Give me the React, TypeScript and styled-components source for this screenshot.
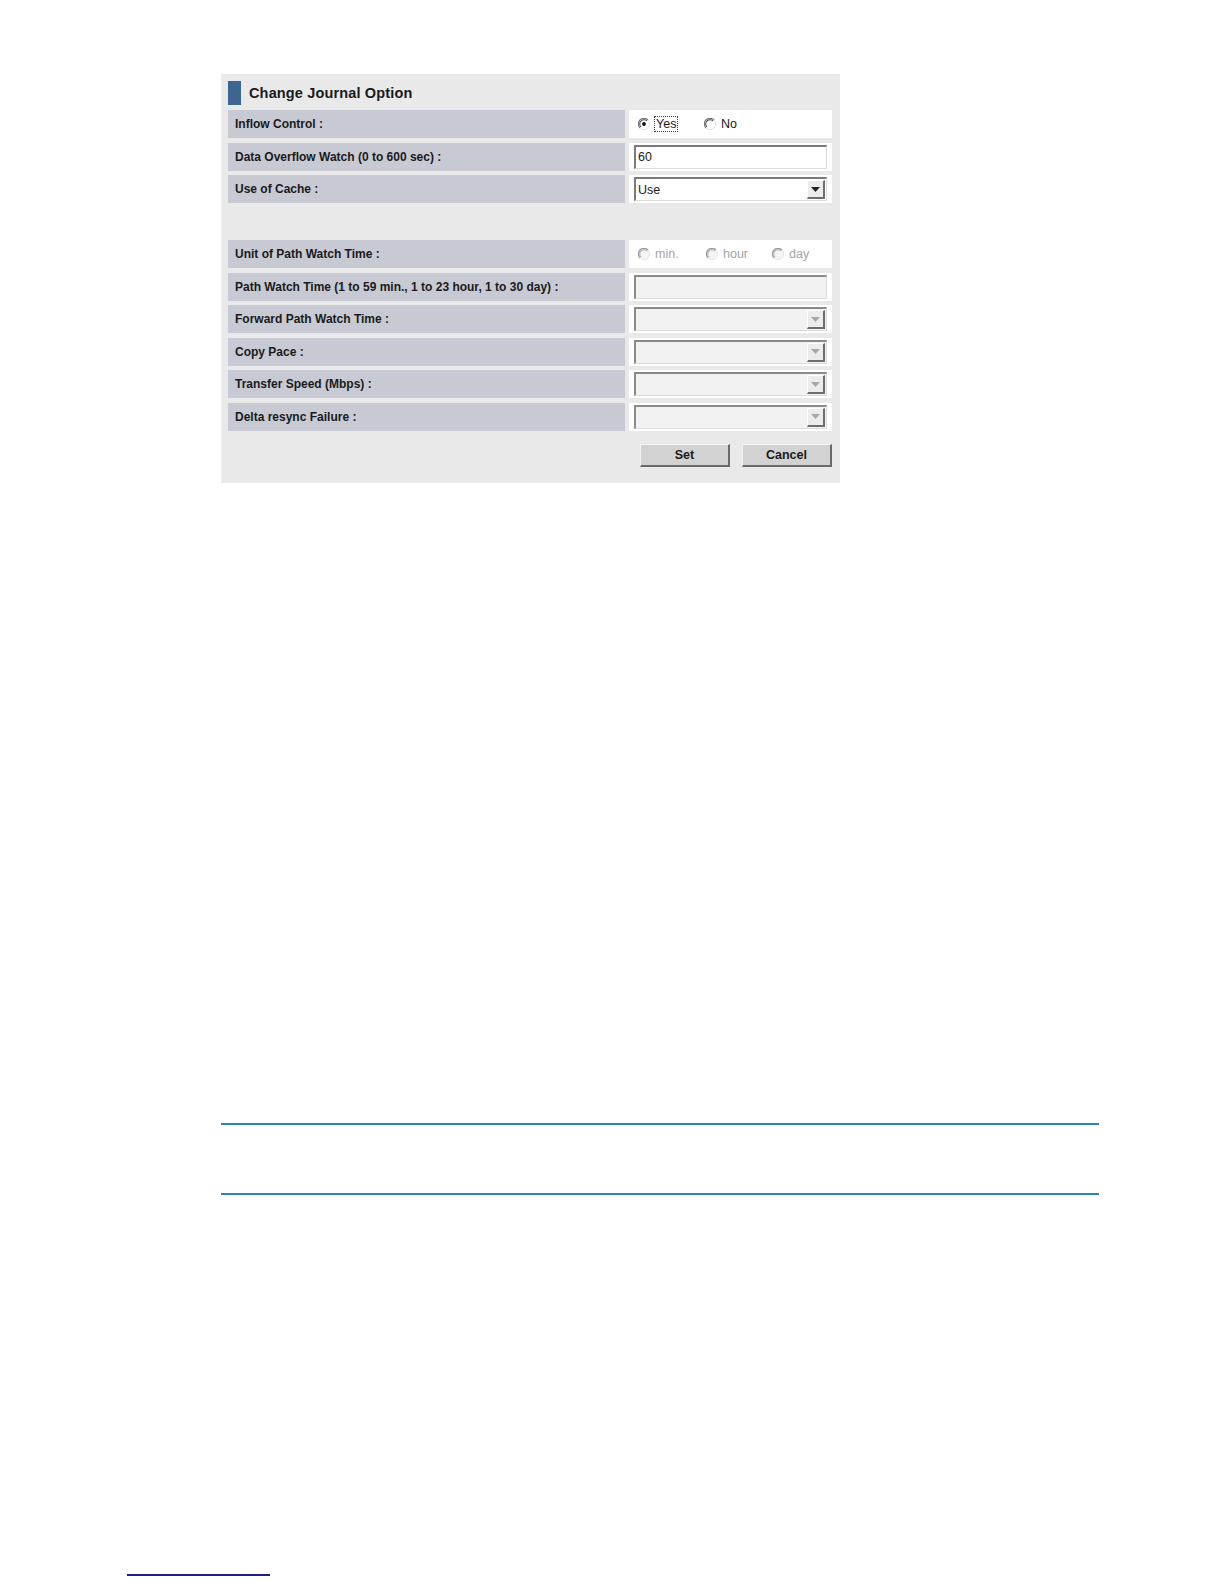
import React from "react";
import styled, { createGlobalStyle } from "styled-components";

const Global = createGlobalStyle`
  html, body { margin: 0; padding: 0; background: #ffffff; }
  body { font-family: "Liberation Sans", Arial, sans-serif; color: #1c1c1c; }
`;

const Page = styled.div`
  width: 1224px;
  padding-top: 74px;
  display: flex;
  flex-direction: column;
`;

const Panel = styled.div`
  margin-left: 221px;
  width: 619px;
  box-sizing: border-box;
  background: #e9e9e9;
  padding: 0 8px 16px 7px;
  display: flex;
  flex-direction: column;
`;

const Header = styled.div`
  height: 36px;
  display: flex;
  align-items: center;
  gap: 8px;
`;

const HeaderBar = styled.div`
  width: 13px;
  height: 24px;
  margin-top: 2px;
  background: #3c6690;
`;

const Title = styled.h2`
  margin: 0;
  margin-top: 2px;
  font-size: 14.5px;
  font-weight: bold;
  color: #1a1a1a;
  letter-spacing: 0.15px;
`;

const Grid = styled.div`
  display: grid;
  grid-template-columns: 397px 203px;
  column-gap: 4px;
  grid-auto-rows: 28px;
  row-gap: 4.5px;
`;

const Label = styled.div`
  background: #c7cad3;
  display: flex;
  align-items: center;
  padding-left: 7px;
  font-size: 12px;
  font-weight: bold;
  letter-spacing: 0;
  color: #1a1a1a;
  white-space: nowrap;
`;

const Value = styled.div`
  background: #ffffff;
  display: flex;
  align-items: center;
  padding: 0 5px;
`;

const Spacer = styled.div`
  grid-column: 1 / span 2;
`;

const RadioGroup = styled.div`
  display: flex;
  align-items: center;
  padding-left: 4px;
  font-size: 12.5px;
`;

const RadioItem = styled.label<{ $w: number; $disabled?: boolean }>`
  display: flex;
  align-items: center;
  gap: 5px;
  width: ${(p) => p.$w}px;
  color: ${(p) => (p.$disabled ? "#a4a4a4" : "#1a1a1a")};
`;

const Focused = styled.span`
  outline: 1px dotted #444;
  outline-offset: 0px;
  padding: 0 1px;
`;

const Field = styled.div<{ $disabled?: boolean }>`
  flex: 1;
  height: 24px;
  box-sizing: border-box;
  border-top: 2px solid ${(p) => (p.$disabled ? "#8a8a8a" : "#7a7a7a")};
  border-left: 2px solid ${(p) => (p.$disabled ? "#8a8a8a" : "#7a7a7a")};
  border-bottom: 1px solid #dcdcdc;
  border-right: 1px solid #dcdcdc;
  background: ${(p) => (p.$disabled ? "#f2f2f2" : "#ffffff")};
  display: flex;
  align-items: center;
  padding-left: 2px;
  font-size: 12.5px;
  color: #1a1a1a;
`;

const FieldText = styled.span`
  flex: 1;
`;

const ArrowBtn = styled.div`
  width: 18px;
  height: 19px;
  margin-right: 1px;
  box-sizing: border-box;
  background: #ececec;
  border-top: 1px solid #ffffff;
  border-left: 1px solid #ffffff;
  border-right: 2px solid #6e6e6e;
  border-bottom: 2px solid #6e6e6e;
  display: flex;
  align-items: center;
  justify-content: center;
`;

const Buttons = styled.div`
  display: flex;
  justify-content: flex-end;
  gap: 12px;
  margin-top: 13.5px;
`;

const Button = styled.button`
  width: 90px;
  height: 23px;
  box-sizing: border-box;
  background: #d2d2d2;
  border-top: 1px solid #f4f4f4;
  border-left: 1px solid #f4f4f4;
  border-right: 2px solid #6a6a6a;
  border-bottom: 2px solid #6a6a6a;
  font-family: "Liberation Sans", Arial, sans-serif;
  font-size: 12.5px;
  font-weight: bold;
  color: #1a1a1a;
  padding: 0;
`;

const NoteBox = styled.div`
  margin-top: 640px;
  margin-left: 221px;
  width: 878px;
  height: 68px;
  border-top: 2px solid #3083b8;
  border-bottom: 2px solid #3083b8;
`;

const FootRule = styled.div`
  margin-top: 379px;
  margin-left: 127px;
  width: 143px;
  height: 2px;
  background: #1c1f8c;
`;

const Radio: React.FC<{ checked?: boolean; disabled?: boolean }> = ({ checked, disabled }) => (
  <svg width="12" height="12" viewBox="0 0 12 12">
    <circle cx="6" cy="6" r="5.5" fill={disabled ? "#f4f4f4" : "#ffffff"} />
    <path d="M10 2 A5.6 5.6 0 0 0 2 10" stroke={disabled ? "#9a9a9a" : "#7a7a7a"} strokeWidth="1.2" fill="none" />
    <path d="M9 3 A4.2 4.2 0 0 0 3 9" stroke={disabled ? "#a8a8a8" : "#3a3a3a"} strokeWidth="1" fill="none" />
    <path d="M2 10 A5.6 5.6 0 0 0 10 2" stroke="#e4e4e4" strokeWidth="1" fill="none" />
    {checked && <circle cx="6" cy="6" r="1.9" fill="#111" />}
  </svg>
);

const Arrow: React.FC<{ disabled?: boolean }> = ({ disabled }) => (
  <svg width="9" height="5" viewBox="0 0 9 5">
    <path d="M0 0 H9 L4.5 5 Z" fill={disabled ? "#a8a8a8" : "#222"} />
  </svg>
);

const Select: React.FC<{ value?: string; disabled?: boolean }> = ({ value, disabled }) => (
  <Field $disabled={disabled}>
    <FieldText>{value}</FieldText>
    <ArrowBtn>
      <Arrow disabled={disabled} />
    </ArrowBtn>
  </Field>
);

export default function App() {
  return (
    <>
      <Global />
      <Page>
        <Panel>
          <Header>
            <HeaderBar />
            <Title>Change Journal Option</Title>
          </Header>
          <Grid>
            <Label>Inflow Control :</Label>
            <Value>
              <RadioGroup>
                <RadioItem $w={66}>
                  <Radio checked />
                  <Focused>Yes</Focused>
                </RadioItem>
                <RadioItem $w={40}>
                  <Radio />
                  No
                </RadioItem>
              </RadioGroup>
            </Value>

            <Label>Data Overflow Watch (0 to 600 sec) :</Label>
            <Value>
              <Field>60</Field>
            </Value>

            <Label>Use of Cache :</Label>
            <Value>
              <Select value="Use" />
            </Value>

            <Spacer />

            <Label>Unit of Path Watch Time :</Label>
            <Value>
              <RadioGroup>
                <RadioItem $w={68} $disabled>
                  <Radio disabled />
                  min.
                </RadioItem>
                <RadioItem $w={66} $disabled>
                  <Radio disabled />
                  hour
                </RadioItem>
                <RadioItem $w={40} $disabled>
                  <Radio disabled />
                  day
                </RadioItem>
              </RadioGroup>
            </Value>

            <Label>Path Watch Time (1 to 59 min., 1 to 23 hour, 1 to 30 day) :</Label>
            <Value>
              <Field $disabled />
            </Value>

            <Label>Forward Path Watch Time :</Label>
            <Value>
              <Select disabled />
            </Value>

            <Label>Copy Pace :</Label>
            <Value>
              <Select disabled />
            </Value>

            <Label>Transfer Speed (Mbps) :</Label>
            <Value>
              <Select disabled />
            </Value>

            <Label>Delta resync Failure :</Label>
            <Value>
              <Select disabled />
            </Value>
          </Grid>
          <Buttons>
            <Button>Set</Button>
            <Button>Cancel</Button>
          </Buttons>
        </Panel>
        <NoteBox />
        <FootRule />
      </Page>
    </>
  );
}
